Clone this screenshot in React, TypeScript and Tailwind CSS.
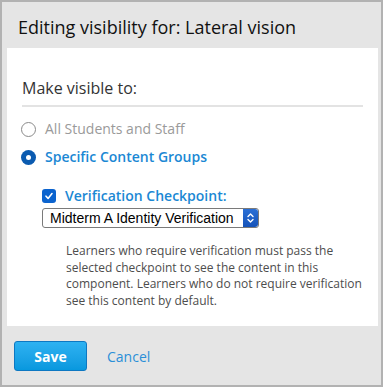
import React from "react";

const sans = { fontFamily: '"Open Sans", "Noto Sans", sans-serif' };

const Stepper: React.FC = () => (
  <div className="w-[15px] h-full bg-gradient-to-b from-[#2a6fd6] to-[#1552b8] rounded-r-[3px] flex items-center justify-center">
    <svg width="9" height="14" viewBox="0 0 9 14" fill="none">
      <path d="M2 5.5 L4.5 3 L7 5.5" stroke="white" strokeWidth="1.4" strokeLinecap="round" strokeLinejoin="round" />
      <path d="M2 8.5 L4.5 11 L7 8.5" stroke="white" strokeWidth="1.4" strokeLinecap="round" strokeLinejoin="round" />
    </svg>
  </div>
);

export default function App() {
  return (
    <div
      className="w-[383px] h-[387px] border-2 border-[#b2b2b2] bg-[#e5e5e5] flex flex-col"
      style={sans}
    >
      {/* Header */}
      <div className="h-[46px] pl-4 pt-[13px] shrink-0">
        <h2 className="text-[18px] leading-[24px] text-[#111]">
          Editing visibility for: Lateral vision
        </h2>
      </div>

      {/* Body */}
      <div className="ml-[5px] mr-[3px] h-[278px] bg-white px-[15px] pt-[29px] shrink-0">
        <div className="text-[16px] leading-[22px] text-[#333] pb-[6px] border-b-2 border-[#e3e3e3]">
          Make visible to:
        </div>

        <div className="mt-3 flex flex-col gap-2">
          <label className="h-5 flex items-center gap-[9px] -ml-px">
            <span className="w-[15px] h-[15px] rounded-full border-[1.5px] border-[#8a8a8a] bg-white" />
            <span className="text-[14px] leading-5 text-[#9a9a9a]">All Students and Staff</span>
          </label>
          <label className="h-5 flex items-center gap-[9px] -ml-px">
            <span className="w-[15px] h-[15px] rounded-full bg-[#0b5bb0] flex items-center justify-center">
              <span className="w-[5px] h-[5px] rounded-full bg-white" />
            </span>
            <span className="text-[14px] leading-5 font-semibold text-[#1b88d4]">
              Specific Content Groups
            </span>
          </label>
        </div>

        <div className="ml-5 mt-[19px]">
          <label className="h-5 flex items-center gap-[9px]">
            <span className="w-[14px] h-[14px] rounded-[3px] bg-[#0b63ce] flex items-center justify-center">
              <svg width="10" height="10" viewBox="0 0 10 10" fill="none">
                <path d="M2 5.2 L4.1 7.4 L8 2.6" stroke="white" strokeWidth="1.6" strokeLinecap="round" strokeLinejoin="round" />
              </svg>
            </span>
            <span className="text-[14px] leading-5 font-semibold text-[#1b88d4]">
              Verification Checkpoint:
            </span>
          </label>
          <div className="mt-[2px] w-[217px] h-5 border border-[#7a7a7a] rounded-[3px] flex items-stretch bg-white">
            <span
              className="flex-1 pl-[7px] text-[14px] leading-[18px] text-black"
              style={{ fontFamily: '"Liberation Sans", Arial, sans-serif' }}
            >
              Midterm A Identity Verification
            </span>
            <Stepper />
          </div>
        </div>

        <p className="ml-[44px] mt-[15px] w-[297px] text-[12px] leading-[16.7px] text-[#4d4d4d]">
          Learners who require verification must pass the selected checkpoint to see the content in
          this component. Learners who do not require verification see this content by default.
        </p>
      </div>

      {/* Footer */}
      <div className="pl-[12px] pt-[15px] flex items-center gap-[20px]">
        <button className="w-[73px] h-[30px] rounded-[3px] border border-[#0d78c2] bg-gradient-to-b from-[#2db2f2] to-[#0798de] text-white text-[14px] font-bold">
          Save
        </button>
        <a className="text-[14px] text-[#2a8fd8] cursor-pointer">Cancel</a>
      </div>
    </div>
  );
}
